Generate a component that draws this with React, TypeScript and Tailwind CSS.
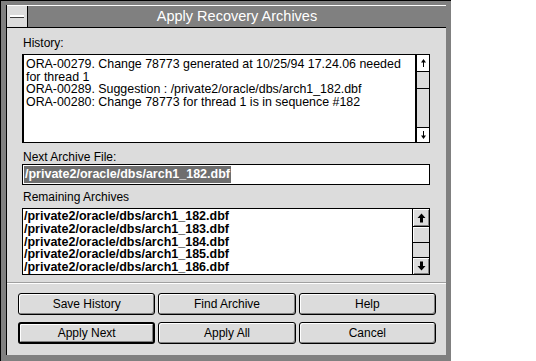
import React from 'react';

const historyLines = [
  'ORA-00279. Change 78773 generated at 10/25/94 17.24.06 needed',
  'for thread 1',
  'ORA-00289. Suggestion : /private2/oracle/dbs/arch1_182.dbf',
  'ORA-00280: Change 78773 for thread 1 is in sequence #182',
];

const archives = [
  '/private2/oracle/dbs/arch1_182.dbf',
  '/private2/oracle/dbs/arch1_183.dbf',
  '/private2/oracle/dbs/arch1_184.dbf',
  '/private2/oracle/dbs/arch1_185.dbf',
  '/private2/oracle/dbs/arch1_186.dbf',
];

const ThinArrow: React.FC<{ down?: boolean }> = ({ down }) => (
  <svg width="7" height="10" viewBox="0 0 7 10" className={down ? 'rotate-180' : ''}>
    <path d="M3.5 1 L1 4.5 H6 Z" fill="black" />
    <rect x="3" y="4" width="1" height="5" fill="black" />
  </svg>
);

const BoldArrow: React.FC<{ down?: boolean }> = ({ down }) => (
  <svg width="9" height="10" viewBox="0 0 9 10" className={down ? 'rotate-180' : ''}>
    <path d="M4.5 0.5 L0.5 5 H3 V9.5 H6 V5 H8.5 Z" fill="black" />
  </svg>
);

const Button: React.FC<{ label: string; isDefault?: boolean }> = ({ label, isDefault }) => (
  <div
    className={`h-[22px] rounded-[3px] border-black bg-[#dcdcdc] shadow-[inset_1px_1px_0_#ffffff,inset_-1px_-1px_0_#808080] flex items-center justify-center text-[12px] text-black ${
      isDefault ? 'border-2' : 'border'
    }`}
  >
    {label}
  </div>
);

export default function App() {
  return (
    <div className="w-[536px] h-[361px] bg-white font-['Liberation_Sans',Arial,sans-serif]">
      <div className="w-[451px] h-[361px] bg-[#808080] border-l border-t border-black pl-[5px] pt-[4px] pr-[5px] pb-[6px] flex">
        <div className="flex-1 flex flex-col border-l border-black bg-[#dcdcdc]">
          {/* title bar */}
          <div className="h-[23px] flex border-t border-white border-b border-b-black bg-[#808080]">
            <div className="w-[21px] bg-[#dcdcdc] border-r border-black flex items-center justify-center">
              <div className="w-[14px] h-[3px] bg-white border-b border-[#404040]" />
            </div>
            <div className="flex-1 flex items-center justify-center text-white text-[14.5px]">
              Apply Recovery Archives
            </div>
          </div>

          {/* client */}
          <div className="flex-1 flex flex-col pt-[8px]">
            <div className="pl-[15px] w-[423px] flex flex-col">
              <div className="h-[14px] leading-[14px] text-[12px] pl-[1px]">History:</div>
              <div className="mt-[4px] h-[89px] flex bg-white border border-black border-l-2">
                <div className="flex-1 pl-[2px] pt-[3px] text-[12.4px] leading-[12.5px] text-black">
                  {historyLines.map((l) => (
                    <div key={l} className="whitespace-nowrap">{l}</div>
                  ))}
                </div>
                <div className="w-[14px] flex flex-col border-l-2 border-black bg-[#dcdcdc]">
                  <div className="h-[17px] bg-white border-b border-black flex items-center justify-center">
                    <ThinArrow />
                  </div>
                  <div className="h-[17px] border-b border-black" />
                  <div className="flex-1" />
                  <div className="h-[15px] bg-white border-t border-black flex items-center justify-center">
                    <ThinArrow down />
                  </div>
                </div>
              </div>

              <div className="mt-[7px] h-[14px] leading-[14px] text-[12px] pl-[1px]">Next Archive File:</div>
              <div className="h-[21px] bg-white border border-black flex items-center pl-[1px]">
                <span className="bg-[#6e6e6e] text-white font-bold text-[12.5px] leading-[17px] px-[1px]">
                  /private2/oracle/dbs/arch1_182.dbf
                </span>
              </div>

              <div className="mt-[5px] h-[14px] leading-[14px] text-[12px] pl-[1px]">Remaining Archives</div>
              <div className="mt-[4px] h-[67px] flex bg-white border border-black">
                <div className="flex-1 pl-[1px] pt-[1px] font-bold text-[12.5px] leading-[12.8px] text-black">
                  {archives.map((a) => (
                    <div key={a} className="whitespace-nowrap">{a}</div>
                  ))}
                </div>
                <div className="w-[17px] flex flex-col border-l border-black bg-[#dcdcdc]">
                  <div className="h-[18px] border-b border-black shadow-[inset_1px_1px_0_#ffffff,inset_-1px_-1px_0_#808080] flex items-center justify-center">
                    <BoldArrow />
                  </div>
                  <div className="h-[16px] border-b border-black shadow-[inset_1px_1px_0_#ffffff]" />
                  <div className="flex-1" />
                  <div className="h-[17px] border-t border-black shadow-[inset_1px_1px_0_#ffffff,inset_-1px_-1px_0_#808080] flex items-center justify-center">
                    <BoldArrow down />
                  </div>
                </div>
              </div>
            </div>

            <div className="mt-[7px] h-[2px] border-t border-[#a0a0a0] border-b border-b-white" />

            <div className="ml-[11px] w-[418px] mt-[9px] grid grid-cols-3 gap-x-[3px] gap-y-[7px]">
              <Button label="Save History" />
              <Button label="Find Archive" />
              <Button label="Help" />
              <Button label="Apply Next" isDefault />
              <Button label="Apply All" />
              <Button label="Cancel" />
            </div>
          </div>
        </div>
      </div>
    </div>
  );
}
